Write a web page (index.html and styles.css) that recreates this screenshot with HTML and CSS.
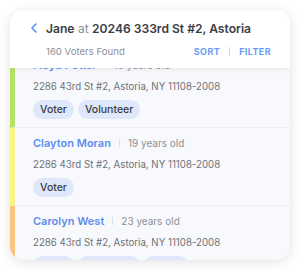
FILE: index.html
```html
<!DOCTYPE html>
<html lang="en">
  <head>
    <meta charset="UTF-8" />
    <meta name="viewport" content="width=device-width, initial-scale=1.0" />
    <title>Voters</title>
    <link rel="stylesheet" href="styles.css">
  </head>
  <body>
    <div class="phone">
      <div class="header">
        <div class="title-row">
          <svg class="back-icon" width="8" height="10" viewBox="0 0 8 10">
            <path d="M6 1 L2 5 L6 9" fill="none" stroke="#5b8def" stroke-width="1.6" stroke-linecap="round" stroke-linejoin="round" />
          </svg>
          <span class="title"><b>Jane</b> <span class="muted">at</span> <b>20246 333rd St #2, Astoria</b></span>
        </div>
        <div class="sub-row">
          <span class="count">160 Voters Found</span>
          <span class="actions">
            <span class="action">SORT</span>
            <span class="divider"></span>
            <span class="action">FILTER</span>
          </span>
        </div>
      </div>

      <div class="list">
        <div class="voter green">
          <div class="name-row">
            <span class="name">Floyd Potter</span>
            <span class="sep"></span>
            <span class="age">19 years old</span>
          </div>
          <div class="address">2286 43rd St #2, Astoria, NY 11108-2008</div>
          <div class="tags">
            <span class="tag">Voter</span>
            <span class="tag">Volunteer</span>
          </div>
        </div>

        <div class="voter yellow">
          <div class="name-row">
            <span class="name">Clayton Moran</span>
            <span class="sep"></span>
            <span class="age">19 years old</span>
          </div>
          <div class="address">2286 43rd St #2, Astoria, NY 11108-2008</div>
          <div class="tags">
            <span class="tag">Voter</span>
          </div>
        </div>

        <div class="voter orange">
          <div class="name-row">
            <span class="name">Carolyn West</span>
            <span class="sep"></span>
            <span class="age">23 years old</span>
          </div>
          <div class="address">2286 43rd St #2, Astoria, NY 11108-2008</div>
          <div class="tags">
            <span class="tag">Voter</span>
            <span class="tag">Volunteer</span>
            <span class="tag">Donor</span>
          </div>
        </div>
      </div>
    </div>
  </body>
</html>
```

FILE: styles.css
```css
body {
  margin: 0;
  background: #ffffff;
  font-family: "Inter", "Open Sans", sans-serif;
}

.phone {
  margin: 10px;
  width: 280px;
  height: 250px;
  border-radius: 14px;
  overflow: hidden;
  background: #f8f9fc;
  box-shadow: 0 2px 12px rgba(0, 0, 0, 0.12);
}

/* Header */
.header {
  position: relative;
  z-index: 2;
  height: 58px;
  box-sizing: border-box;
  padding: 10px 19px 0 20px;
  background: #ffffff;
  box-shadow: 0 2px 4px rgba(0, 0, 0, 0.06);
}

.title-row {
  display: flex;
  align-items: center;
  gap: 8px;
  height: 16px;
}

.back-icon {
  flex: none;
}

.title {
  font-size: 12.1px;
  color: #3a3d45;
  white-space: nowrap;
}

.title b {
  font-weight: 600;
}

.muted {
  color: #8d9099;
}

.sub-row {
  display: flex;
  align-items: center;
  justify-content: space-between;
  margin-top: 9px;
  padding-left: 16px;
  height: 12px;
}

.count {
  font-size: 9.6px;
  color: #8d9099;
}

.actions {
  display: flex;
  align-items: center;
  gap: 9px;
}

.action {
  font-size: 9px;
  font-weight: 700;
  color: #6b9bf2;
  letter-spacing: 0.4px;
}

.divider {
  width: 1px;
  height: 9px;
  background: #d8dbe2;
}

/* Voter list */
.list {
  margin-top: -18px;
}

.voter {
  height: 78px;
  box-sizing: border-box;
  padding: 8px 10px 0 18px;
  border-left: 5px solid;
  border-bottom: 1px solid #eceef3;
}

.voter.green {
  border-left-color: #b4e36a;
}

.voter.yellow {
  border-left-color: #fbf385;
}

.voter.orange {
  border-left-color: #fcc47c;
}

.name-row {
  display: flex;
  align-items: center;
  gap: 8px;
  height: 14px;
}

.name {
  font-size: 11px;
  font-weight: 600;
  color: #5b8def;
}

.sep {
  width: 1px;
  height: 8px;
  background: #dcdfe5;
}

.age {
  font-size: 10px;
  color: #8d9099;
}

.address {
  margin-top: 8px;
  font-size: 9.7px;
  line-height: 14px;
  color: #6e7179;
  white-space: nowrap;
}

.tags {
  display: flex;
  gap: 4px;
  margin-top: 6px;
}

.tag {
  height: 19px;
  line-height: 19px;
  padding: 0 7px;
  border-radius: 10px;
  background: #dfe7fb;
  color: #3a3d45;
  font-size: 10.5px;
  font-weight: 500;
}
```
